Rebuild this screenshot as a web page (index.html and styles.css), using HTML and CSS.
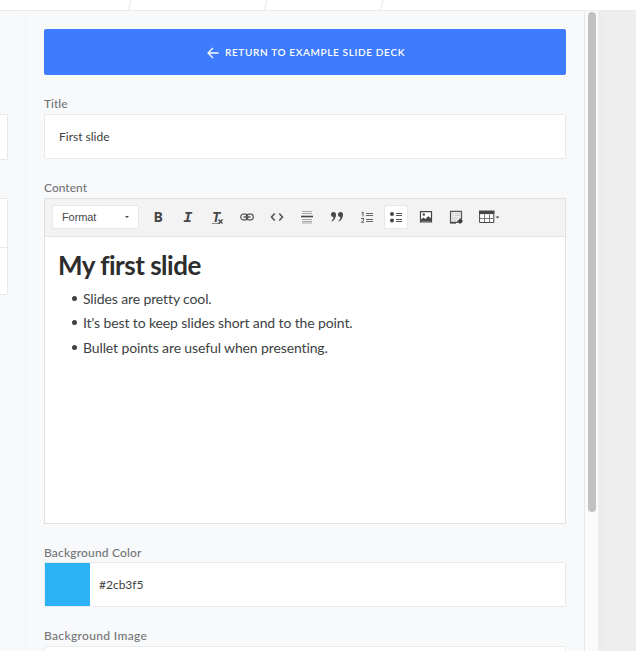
FILE: index.html
```html
<!DOCTYPE html>
<html lang="en">
<head>
<meta charset="utf-8">
<title>Slide editor</title>
<link rel="stylesheet" href="styles.css">
</head>
<body>
<header class="crumbs">
  <svg width="636" height="10" viewBox="0 0 636 10"><path d="M131 0L128.500 10M267 0L264.500 10M383 0L380.500 10"/></svg>
</header>
<div class="workspace">
  <section class="list-panel">
    <div class="list-field"></div>
    <div class="list-group"><div></div><div></div></div>
  </section>
  <main class="editor">
    <a class="return"><svg width="12" height="12" viewBox="0 0 12 12"><path d="M11.500 6H1M6 1L1 6l5 5"/></svg><span>RETURN TO EXAMPLE SLIDE DECK</span></a>
    <label class="label title-label"><span>Title</span></label>
    <div class="input"><span>First slide</span></div>
    <label class="label content-label"><span>Content</span></label>
    <div class="rich">
      <div class="toolbar">
        <div class="format"><span>Format</span><i class="caret"></i></div>
        <button class="tool bold">B</button>
        <button class="tool italic">I</button>
        <button class="tool clear"><span>T</span><svg width="5" height="5" viewBox="0 0 5 5"><path d="M.5.5l4 4M4.500.5l-4 4"/></svg></button>
        <button class="tool"><svg width="14" height="14" viewBox="0 0 14 14"><g fill="none" stroke="#555" stroke-width="1.200"><rect x=".8" y="4.200" width="7" height="5.600" rx="2.500"/><rect x="6.200" y="4.200" width="7" height="5.600" rx="2.500"/></g><path d="M3.500 7h7" stroke="#555" stroke-width="1.400"/></svg></button>
        <button class="tool"><svg width="14" height="14" viewBox="0 0 14 14"><path d="M4.700 3.500L1.500 7l3.200 3.500M9.300 3.500L12.500 7l-3.200 3.500" fill="none" stroke="#555" stroke-width="1.600"/></svg></button>
        <button class="tool"><svg width="14" height="14" viewBox="0 0 14 14"><path d="M2 1.500h10M2 3.500h10M2 9.500h10M2 11.500h10M2 13h10" stroke="#aaa"/><path d="M1 6.500h12" stroke="#474747" stroke-width="1.600"/></svg></button>
        <button class="tool"><svg width="14" height="14" viewBox="0 0 14 14" fill="#474747"><path id="q" d="M1 4.600A2.500 2.500 0 0 1 6 4.600C6 8 4.400 10.500 1.700 11.500L1.400 10.900C2.800 9.900 3.500 8.600 3.500 7.100A2.500 2.500 0 0 1 1 4.600Z"/><use href="#q" x="7"/></svg></button>
        <button class="tool"><svg width="14" height="14" viewBox="0 0 14 14"><path d="M6 3.500h7M6 5.500h7M6 9.500h7M6 11.500h7" stroke="#666"/><path d="M1.500 3L3 2v4.500M1 8.500h2.500v1.800L1.500 12.300H4" fill="none" stroke="#555"/></svg></button>
        <button class="tool active"><svg width="14" height="14" viewBox="0 0 14 14"><circle cx="3" cy="4" r="2" fill="#474747"/><circle cx="3" cy="10.500" r="2" fill="#474747"/><path d="M7 3.500h6M7 5.500h6M7 9.500h6M7 11.500h6" stroke="#555"/></svg></button>
        <button class="tool"><svg width="14" height="14" viewBox="0 0 14 14"><path d="M1.500 1.700h11v10.300h-11z" fill="#fff" stroke="#474747" stroke-width="1.200"/><path d="M2 11.500V9.500l2.500-2 2 1.500L9.300 6l1 1.500.7-.5 1.500 2v2.500z" fill="#474747"/><circle cx="4.800" cy="4.500" r="1.200" fill="#474747"/></svg></button>
        <button class="tool"><svg width="14" height="14" viewBox="0 0 14 14"><path d="M1.500 1.300h11v11h-11z" fill="#eee" stroke="#555" stroke-width="1.200"/><path d="M3 3.500h1.500M4 3.500v3M6 3.500h5M6 5.500h5M3 8h6M3 10h4" fill="none" stroke="#ccc"/><path d="M1 12.800h6" stroke="#474747" stroke-width="1.600"/><path d="M11 8.500v5M8.500 11h5" stroke="#333" stroke-width="1.600"/></svg></button>
        <button class="tool table"><svg width="21" height="14" viewBox="0 0 21 14"><path d="M.6 1.500h14.200v11H.6z" fill="#fff" stroke="#474747"/><path d="M0 .5h15.400v3.600H0z" fill="#474747"/><path d="M5.500 4.500v8M10.500 4.500v8M1 8.500h13.500" stroke="#777"/><path d="M16.500 6.500h4L18.500 8.500z" fill="#474747"/></svg></button>
      </div>
      <div class="document">
        <h1>My first slide</h1>
        <ul><li>Slides are pretty cool.</li><li>It's best to keep slides short and to the point.</li><li>Bullet points are useful when presenting.</li></ul>
      </div>
    </div>
    <label class="label color-label"><span>Background Color</span></label>
    <div class="input color"><i class="swatch"></i><span>#2cb3f5</span></div>
    <label class="label image-label"><span>Background Image</span></label>
    <div class="input"></div>
  </main>
  <div class="scroll"><div class="thumb"></div></div>
  <aside class="outside"></aside>
</div>
</body>
</html>
```
FILE: styles.css
```css
* { box-sizing: border-box; }
body { margin: 0; height: 651px; overflow: hidden; background: #eee; font-family: Lato, "Open Sans", sans-serif; color: #444; }
svg { display: block; flex: none; overflow: visible; }
.crumbs { height: 10px; background: #fff; }
.crumbs path { fill: none; stroke: #e5e5e5; }
.workspace { display: flex; height: 641px; border-top: 1px solid #ebebeb; overflow: hidden; }
.list-panel { width: 26px; background: linear-gradient(90deg, #f8f9fb 22px, #f5f6f7 26px); padding-top: 103px; }
.list-field { width: 8px; height: 46px; background: #fff; border: 1px solid #e7e8e9; border-left: 0; border-radius: 0 2px 2px 0; }
.list-group { width: 8px; height: 97px; margin-top: 38px; background: #fff; border: 1px solid #e7e8e9; border-left: 0; border-radius: 0 2px 2px 0; }
.list-group div { height: 49px; border-bottom: 1px solid #e7e8e9; }
.list-group div + div { border: 0; }
.editor { width: 558px; height: 660px; background: #f8f9fb; padding: 18px 18px 0; }
.return { display: flex; align-items: center; justify-content: center; height: 46px; padding-left: 2px; border-radius: 2px; background: #3e7bfd; color: #fff; font-size: 10px; font-weight: 600; gap: 6px; white-space: nowrap; }
.return svg { margin-top: 1px; }
.return svg path { fill: none; stroke: #fff; stroke-width: 1.300; }
.return span { letter-spacing: .65px; }
.label { display: flex; align-items: center; height: 17px; padding-bottom: 2px; font-size: 12px; font-weight: 500; color: #737577; white-space: nowrap; }
.title-label { margin-top: 20px; height: 19px; }
.input { height: 45px; display: flex; align-items: center; border: 1px solid #e8e9ea; border-radius: 2px; background: #fff; padding-left: 14px; font-size: 12px; color: #404040; }
.content-label { margin-top: 20px; height: 19px; }
.rich { height: 326px; border: 1px solid #dfe0e1; background: #fff; }
.toolbar { height: 38px; display: flex; align-items: center; background: #f3f3f3; border-bottom: 1px solid #e4e4e4; padding: 0 0 1px 7px; }
.format { width: 87px; height: 24px; margin-right: 4.200px; padding: 0 9px 1px; display: flex; align-items: center; justify-content: space-between; border: 1px solid #e8e8e8; border-radius: 2px; background: #fff; font: 11px "Liberation Sans", sans-serif; color: #484848; }
.format span { letter-spacing: -.1px; }
.caret { border: 2px solid transparent; border-top-color: #444; border-bottom: 0; }
.tool { width: 24px; height: 24px; margin: 0 2.900px; padding: 0; border: 1px solid transparent; border-radius: 2px; background: none; display: flex; align-items: center; justify-content: center; flex: none; color: #474747; }
.bold { font: 700 14px "Open Sans", sans-serif; padding-bottom: 1px; }
.italic { font: italic 700 15px "Liberation Mono", monospace; padding-top: 2px; }
.clear { font: italic 700 14px "Liberation Mono", monospace; padding-top: 1px; }
.clear span { text-decoration: underline; text-decoration-color: #888; text-underline-offset: 1px; }
.clear svg { margin: 8px 0 0 -2px; }
.clear path { stroke: #474747; stroke-width: 1.300; }
.active { background: #fff; border-color: #e8e8e8; }
.table { padding-left: 7px; }
.document { padding: 9px 12px 0 13px; }
h1 { margin: 0; height: 40px; line-height: 38px; font-size: 26px; font-weight: 700; letter-spacing: -.5px; color: #2d2d2d; white-space: nowrap; }
ul { margin: 0; padding: 0; list-style: none; font-size: 14px; letter-spacing: -.12px; color: #3d4244; }
li { height: 24.500px; display: flex; align-items: center; padding-left: 14px; white-space: nowrap; }
li::before { content: ""; width: 5px; height: 5px; border-radius: 50%; background: #3d4244; margin-right: 6px; }
.color-label { margin-top: 21px; letter-spacing: .17px; }
.color { padding-left: 0; }
.swatch { width: 45px; height: 43px; background: #2cb3f5; margin-right: 9px; }
.image-label { margin-top: 22px; padding-bottom: 4px; letter-spacing: .34px; }
.scroll { width: 15px; background: #fafafa; border-left: 1px solid #e8e8e8; border-right: 1px solid #ededed; padding: 1px 0 0 3px; }
.thumb { width: 8px; height: 500px; border-radius: 4px; background: #c1c1c1; }
.outside { flex: 1; background: linear-gradient(90deg, #ebebeb, #eee 6px); }
```
